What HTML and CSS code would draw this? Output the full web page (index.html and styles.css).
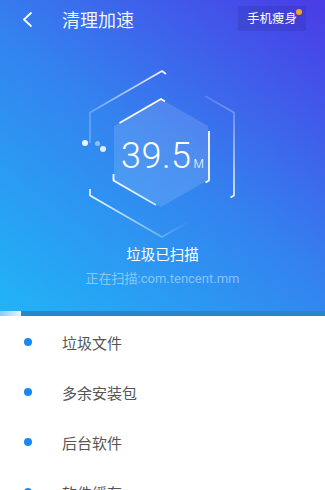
FILE: index.html
```html
<!DOCTYPE html>
<html lang="zh-CN">
<head>
  <meta charset="UTF-8">
  <title>清理加速</title>
  <link rel="stylesheet" href="styles.css">
</head>
<body>
  <div class="hero">
    <div class="topbar">
      <svg class="back" width="14" height="18" viewBox="0 0 14 18">
        <path d="M10 2 L3 8.5 L10 15" fill="none" stroke="#fff" stroke-width="1.8" stroke-linecap="round" stroke-linejoin="round"/>
      </svg>
      <div class="title">清理加速</div>
      <div class="slim-btn">手机瘦身<span class="badge"></span></div>
    </div>

    <div class="gauge">
      <svg width="325" height="208" viewBox="0 37 325 208">
        <defs>
          <linearGradient id="outerTop" x1="90" y1="0" x2="166" y2="0" gradientUnits="userSpaceOnUse">
            <stop offset="0" stop-color="#fff" stop-opacity="0.25"/>
            <stop offset="1" stop-color="#fff" stop-opacity="0.95"/>
          </linearGradient>
          <linearGradient id="outerRight" x1="0" y1="95" x2="0" y2="197" gradientUnits="userSpaceOnUse">
            <stop offset="0" stop-color="#fff" stop-opacity="0.15"/>
            <stop offset="0.4" stop-color="#fff" stop-opacity="0.5"/>
            <stop offset="1" stop-color="#fff" stop-opacity="0.95"/>
          </linearGradient>
          <linearGradient id="outerBottom" x1="90" y1="0" x2="190" y2="0" gradientUnits="userSpaceOnUse">
            <stop offset="0" stop-color="#fff" stop-opacity="0.95"/>
            <stop offset="0.65" stop-color="#fff" stop-opacity="0.35"/>
            <stop offset="1" stop-color="#fff" stop-opacity="0"/>
          </linearGradient>
          <linearGradient id="innerBottom" x1="114" y1="0" x2="158" y2="0" gradientUnits="userSpaceOnUse">
            <stop offset="0" stop-color="#fff" stop-opacity="1"/>
            <stop offset="1" stop-color="#fff" stop-opacity="0.75"/>
          </linearGradient>
        </defs>

        <!-- outer ring -->
        <path d="M90 142 L90 111.5 L162 70 L166 73" fill="none" stroke="url(#outerTop)" stroke-width="1.6" stroke-linejoin="round"/>
        <path d="M205 95 L234 111.5 L234 194.5 L230.5 196.5" fill="none" stroke="url(#outerRight)" stroke-width="1.6" stroke-linejoin="round"/>
        <path d="M90 188 L90 194.5 L162 236 L190 220" fill="none" stroke="url(#outerBottom)" stroke-width="1.6" stroke-linejoin="round"/>

        <!-- inner hexagon -->
        <polygon points="161,98 208,125 208,179 161,206 114,179 114,125" fill="#fff" fill-opacity="0.13"/>
        <path d="M119.5 122 L161 98 L165 100.5" fill="none" stroke="#fff" stroke-width="1.8" stroke-linejoin="round"/>
        <path d="M209 130 L209 179.5 L205.5 181.5" fill="none" stroke="#fff" stroke-width="1.8" stroke-linejoin="round"/>
        <path d="M113.5 173 L113.5 179.5 L156 204" fill="none" stroke="url(#innerBottom)" stroke-width="1.8" stroke-linejoin="round"/>

        <!-- dots -->
        <circle cx="85" cy="142" r="3" fill="#fff" fill-opacity="0.9"/>
        <circle cx="97.5" cy="142.5" r="2.5" fill="#fff" fill-opacity="0.45"/>
        <circle cx="103" cy="148" r="3" fill="#fff" fill-opacity="0.85"/>
      </svg>
      <div class="value">39.5<span class="unit">M</span></div>
    </div>

    <div class="status">垃圾已扫描</div>
    <div class="scanning">正在扫描:com.tencent.mm</div>
  </div>

  <div class="progress">
    <div class="progress-fill" style="width: 21px"></div>
  </div>

  <ul class="list">
    <li class="item"><span class="dot"></span>垃圾文件</li>
    <li class="item"><span class="dot"></span>多余安装包</li>
    <li class="item"><span class="dot"></span>后台软件</li>
    <li class="item"><span class="dot"></span>软件缓存</li>
  </ul>
</body>
</html>
```

FILE: styles.css
```css
html, body {
  margin: 0;
  padding: 0;
}

body {
  width: 325px;
  height: 490px;
  overflow: hidden;
  background: #fff;
  font-family: Roboto, "Noto Sans CJK SC", sans-serif;
}

.hero {
  height: 311px;
  background: linear-gradient(38deg, #21b4f6 0%, #3482ef 50%, #4a3be6 100%);
  color: #fff;
  display: flex;
  flex-direction: column;
}

.topbar {
  height: 38px;
  display: flex;
  align-items: center;
  padding: 0 19px 0 21px;
}

.back {
  display: block;
  margin-top: 1px;
}

.title {
  margin-left: 27px;
  font-size: 18px;
  color: rgba(255, 255, 255, 0.95);
}

.slim-btn {
  position: relative;
  margin-left: auto;
  width: 68px;
  height: 25px;
  margin-top: -1px;
  line-height: 25px;
  text-align: center;
  font-size: 12.5px;
  background: rgba(30, 30, 110, 0.16);
}

.badge {
  position: absolute;
  top: 3px;
  right: 4px;
  width: 6px;
  height: 6px;
  border-radius: 50%;
  background: #f7a21b;
}

.gauge {
  position: relative;
  height: 208px;
}

.gauge svg {
  display: block;
}

.value {
  position: absolute;
  top: 100px;
  left: 0;
  right: 0;
  text-align: center;
  font-family: Roboto, sans-serif;
  font-weight: 300;
  font-size: 36px;
  line-height: 36px;
  letter-spacing: 0.5px;
}

.unit {
  font-size: 12px;
  margin-left: 2px;
  letter-spacing: 0;
}

.status {
  text-align: center;
  font-size: 14.5px;
  line-height: 20px;
}

.scanning {
  margin-top: 4px;
  text-align: center;
  font-size: 13px;
  line-height: 18px;
  color: rgba(255, 255, 255, 0.45);
}

.progress {
  height: 5px;
  background: #2a86cc;
}

.progress-fill {
  height: 100%;
  background: linear-gradient(90deg, #8ccaf2, #e8f4fc);
}

.list {
  list-style: none;
  margin: 0;
  padding: 1px 0 0 0;
}

.item {
  height: 50px;
  display: flex;
  align-items: center;
  font-size: 15px;
  color: #555;
}

.dot {
  width: 8px;
  height: 8px;
  border-radius: 50%;
  background: #1689f3;
  margin: 0 30px 0 24px;
}
```
